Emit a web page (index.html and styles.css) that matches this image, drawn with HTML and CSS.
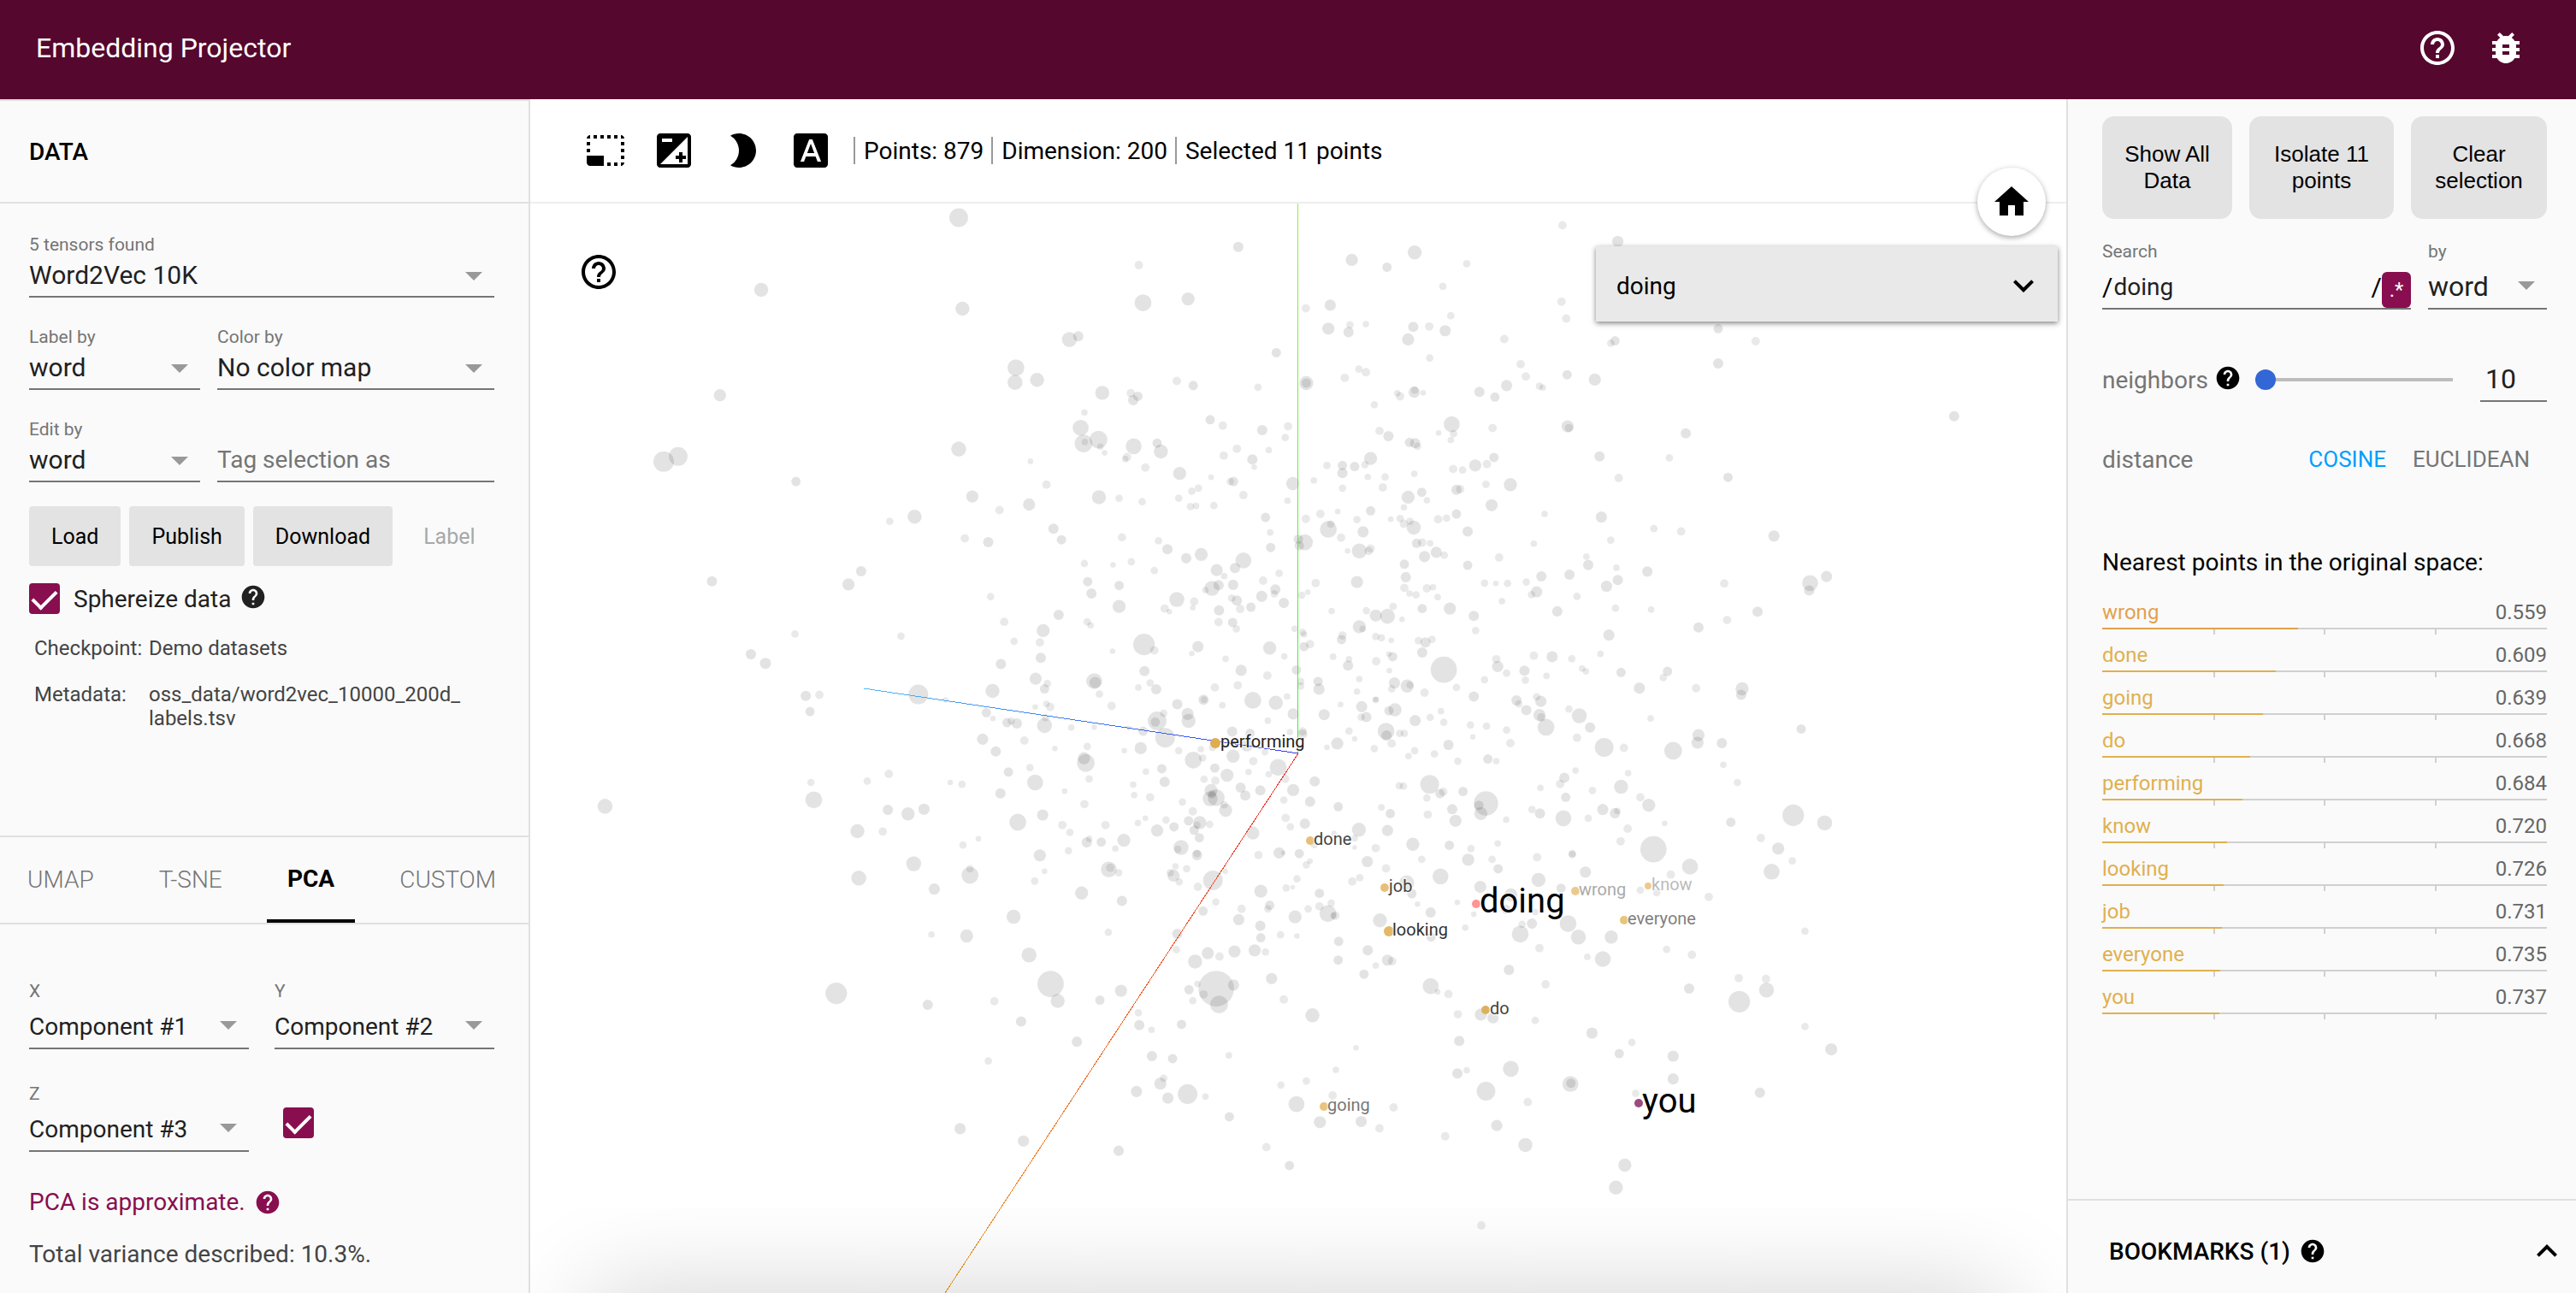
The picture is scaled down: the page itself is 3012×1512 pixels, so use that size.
FILE: index.html
```html
<!DOCTYPE html>
<html lang="en">
<head>
<meta charset="utf-8">
<title>Embedding Projector</title>
<link rel="stylesheet" href="styles.css">
</head>
<body>
<svg class="defs" aria-hidden="true">
  <symbol id="i-help" viewBox="0 0 24 24"><path d="M12 2C6.48 2 2 6.48 2 12s4.48 10 10 10 10-4.48 10-10S17.52 2 12 2zm1 17h-2v-2h2v2zm2.07-7.75l-.9.92C13.45 12.9 13 13.5 13 15h-2v-.5c0-1.1.45-2.1 1.17-2.83l1.24-1.26c.37-.36.59-.86.59-1.41 0-1.1-.9-2-2-2s-2 .9-2 2H8c0-2.21 1.79-4 4-4s4 1.79 4 4c0 .88-.36 1.68-.93 2.25z"/></symbol>
  <symbol id="i-help-outline" viewBox="0 0 24 24"><path d="M11 18h2v-2h-2v2zm1-16C6.48 2 2 6.48 2 12s4.48 10 10 10 10-4.48 10-10S17.52 2 12 2zm0 18c-4.41 0-8-3.59-8-8s3.59-8 8-8 8 3.59 8 8-3.59 8-8 8zm0-14c-2.21 0-4 1.79-4 4h2c0-1.1.9-2 2-2s2 .9 2 2c0 2-3 1.75-3 5h2c0-2.25 3-2.5 3-5 0-2.21-1.79-4-4-4z"/></symbol>
  <symbol id="i-bug" viewBox="0 0 24 24"><path d="M20 8h-2.81c-.45-.78-1.07-1.45-1.82-1.96L17 4.41 15.59 3l-2.17 2.17C12.96 5.06 12.49 5 12 5c-.49 0-.96.06-1.41.17L8.41 3 7 4.41l1.62 1.63C7.88 6.55 7.26 7.22 6.81 8H4v2h2.09c-.05.33-.09.66-.09 1v1H4v2h2v1c0 .34.04.67.09 1H4v2h2.81c1.04 1.79 2.97 3 5.19 3s4.15-1.21 5.19-3H20v-2h-2.09c.05-.33.09-.66.09-1v-1h2v-2h-2v-1c0-.34-.04-.67-.09-1H20V8zm-6 8h-4v-2h4v2zm0-4h-4v-2h4v2z"/></symbol>
  <symbol id="i-select" viewBox="0 0 24 24"><path d="M23 15h-2v2h2v-2zm0-4h-2v2h2v-2zm0 8h-2v2c1 0 2-1 2-2zM15 3h-2v2h2V3zm8 4h-2v2h2V7zm-2-4v2h2c0-1-1-2-2-2zM3 21h8v-6H1v4c0 1.100.9 2 2 2zM3 7H1v2h2V7zm12 12h-2v2h2v-2zm4-16h-2v2h2V3zm0 16h-2v2h2v-2zM3 3C2 3 1 4 1 5h2V3zm0 8H1v2h2v-2zm8-8H9v2h2V3zM7 3H5v2h2V3z"/></symbol>
  <symbol id="i-exposure" viewBox="0 0 24 24"><path d="M15 17v2h2v-2h2v-2h-2v-2h-2v2h-2v2h2zm5-15H4c-1.100 0-2 .9-2 2v16c0 1.100.9 2 2 2h16c1.100 0 2-.9 2-2V4c0-1.100-.9-2-2-2zM5 5h6v2H5V5zm15 15H4L20 4v16z"/></symbol>
  <symbol id="i-moon" viewBox="0 0 24 24"><path d="M10 2c-1.820 0-3.530.5-5 1.350C7.990 5.080 10 8.300 10 12s-2.010 6.920-5 8.650C6.470 21.500 8.180 22 10 22c5.520 0 10-4.480 10-10S15.520 2 10 2z"/></symbol>
  <symbol id="i-font" viewBox="0 0 24 24"><path d="M9.930 13.500h4.140L12 7.980zM20 2H4c-1.100 0-2 .9-2 2v16c0 1.100.9 2 2 2h16c1.100 0 2-.9 2-2V4c0-1.100-.9-2-2-2zm-4.050 16.500l-1.140-3H9.170l-1.120 3H5.960l5.110-13h1.860l5.110 13h-2.090z"/></symbol>
  <symbol id="i-home" viewBox="0 0 24 24"><path d="M10 20v-6h4v6h5v-8h3L12 3 2 12h3v8z"/></symbol>
  <symbol id="i-more" viewBox="0 0 24 24"><path d="M16.590 8.590L12 13.170 7.410 8.590 6 10l6 6 6-6z"/></symbol>
  <symbol id="i-less" viewBox="0 0 24 24"><path d="M12 8l-6 6 1.410 1.410L12 10.830l4.590 4.580L18 14z"/></symbol>
</svg>

<header class="appbar">
  <h1 class="appbar-title">Embedding Projector</h1>
  <nav class="appbar-actions">
    <a href="#help" class="icon-btn" aria-label="Help"><svg class="icon"><use href="#i-help-outline"/></svg></a>
    <a href="#bug" class="icon-btn" aria-label="Report a bug"><svg class="icon"><use href="#i-bug"/></svg></a>
  </nav>
</header>

<div class="layout">
  <aside class="panel panel-left">
    <h2 class="panel-title">DATA</h2>
    <section class="data">
      <div class="field">
        <label for="tensor">5 tensors found</label>
        <div class="select"><select id="tensor"><option>Word2Vec 10K</option></select></div>
      </div>
      <div class="field-row">
        <div class="field">
          <label for="label-by">Label by</label>
          <div class="select"><select id="label-by"><option>word</option></select></div>
        </div>
        <div class="field">
          <label for="color-by">Color by</label>
          <div class="select"><select id="color-by"><option>No color map</option></select></div>
        </div>
      </div>
      <div class="field-row">
        <div class="field">
          <label for="edit-by">Edit by</label>
          <div class="select"><select id="edit-by"><option>word</option></select></div>
        </div>
        <div class="field field-end">
          <input class="text-input" type="text" placeholder="Tag selection as" aria-label="Tag selection as">
        </div>
      </div>
      <div class="buttons">
        <button type="button" class="btn">Load</button>
        <button type="button" class="btn">Publish</button>
        <button type="button" class="btn">Download</button>
        <button type="button" class="btn" disabled>Label</button>
      </div>
      <div class="check-row">
        <input class="check" type="checkbox" id="sphereize" checked>
        <label for="sphereize">Sphereize data</label>
        <svg class="icon-small"><use href="#i-help"/></svg>
      </div>
      <dl class="meta">
        <dt>Checkpoint:</dt><dd>Demo datasets</dd>
        <dt>Metadata:</dt><dd>oss_data/word2vec_10000_200d_<wbr>labels.tsv</dd>
      </dl>
    </section>

    <section class="projections">
      <div class="tabs" role="tablist">
        <button type="button" class="tab" role="tab">UMAP</button>
        <button type="button" class="tab" role="tab">T-SNE</button>
        <button type="button" class="tab tab-active" role="tab" aria-selected="true">PCA</button>
        <button type="button" class="tab" role="tab">CUSTOM</button>
      </div>
      <div class="pca">
        <div class="pca-grid">
          <div class="field field-tall">
            <label for="pca-x">X</label>
            <div class="select"><select id="pca-x"><option>Component #1</option></select></div>
          </div>
          <div class="field field-tall">
            <label for="pca-y">Y</label>
            <div class="select"><select id="pca-y"><option>Component #2</option></select></div>
          </div>
          <div class="field field-tall">
            <label for="pca-z">Z</label>
            <div class="select"><select id="pca-z"><option>Component #3</option></select></div>
          </div>
          <div class="pca-check"><input class="check" type="checkbox" aria-label="Use Z component" checked></div>
        </div>
        <p class="pca-note">PCA is approximate. <svg class="icon-small"><use href="#i-help"/></svg></p>
        <p class="pca-variance">Total variance described: 10.3%.</p>
      </div>
    </section>
  </aside>

  <main class="main">
    <div class="toolbar">
      <button type="button" class="tool" aria-label="Bounding box selection"><svg class="icon"><use href="#i-select"/></svg></button>
      <button type="button" class="tool" aria-label="Edit selection"><svg class="icon"><use href="#i-exposure"/></svg></button>
      <button type="button" class="tool" aria-label="Night mode"><svg class="icon"><use href="#i-moon"/></svg></button>
      <button type="button" class="tool" aria-label="3D labels"><svg class="icon"><use href="#i-font"/></svg></button>
      <ul class="stats">
        <li>Points: 879</li>
        <li>Dimension: 200</li>
        <li>Selected 11 points</li>
      </ul>
    </div>
    <div class="stage">
      <svg class="plot" viewBox="620 238 1796 1274" preserveAspectRatio="xMidYMid slice">
        <defs>
          <linearGradient id="g-y" gradientUnits="userSpaceOnUse" x1="0" y1="238" x2="0" y2="881"><stop offset="0" stop-color="#91f233"/><stop offset="1" stop-color="#33f033"/></linearGradient>
          <linearGradient id="g-z" gradientUnits="userSpaceOnUse" x1="1010" y1="0" x2="1518" y2="0"><stop offset="0" stop-color="#4db8f5"/><stop offset=".5" stop-color="#3a78f0"/><stop offset="1" stop-color="#3336ee"/></linearGradient>
          <linearGradient id="g-x" gradientUnits="userSpaceOnUse" x1="0" y1="881" x2="0" y2="1512"><stop offset="0" stop-color="#ee3333"/><stop offset="1" stop-color="#ee9c22"/></linearGradient>
        </defs>
        <g id="points" class="points"></g>
        <path class="axis" stroke="url(#g-y)" d="M1517.400 238L1517.600 881"/>
        <path class="axis" stroke="url(#g-z)" d="M1010 805L1518 881"/>
        <path class="axis" stroke="url(#g-x)" d="M1518 881L1105 1512"/>
        <g id="marks"></g>
        <g class="labels">
          <text x="1427" y="874" fill="#222">performing</text>
          <text x="1536" y="988" fill="#444">done</text>
          <text x="1624" y="1043" fill="#444">job</text>
          <text x="1628" y="1094" fill="#333">looking</text>
          <text x="1846" y="1047" fill="#aaa">wrong</text>
          <text x="1931" y="1041" fill="#bbb">know</text>
          <text x="1903" y="1081" fill="#808080">everyone</text>
          <text x="1742" y="1186" fill="#444">do</text>
          <text x="1552" y="1299" fill="#777">going</text>
          <text class="label-big" x="1730" y="1067">doing</text>
          <text class="label-big" x="1920" y="1301">you</text>
        </g>
      </svg>
      <svg class="icon stage-help"><use href="#i-help-outline"/></svg>
      <button type="button" class="home" aria-label="Reset zoom"><svg class="icon"><use href="#i-home"/></svg></button>
      <button type="button" class="metadata-card"><span>doing</span><svg class="icon"><use href="#i-more"/></svg></button>
      <div class="drawer"><div class="drawer-edge"></div></div>
    </div>
  </main>

  <aside class="panel panel-right">
    <section class="inspector">
      <div class="actions">
        <button type="button" class="action">Show All Data</button>
        <button type="button" class="action">Isolate 11 points</button>
        <button type="button" class="action">Clear selection</button>
      </div>
      <div class="search-row">
        <div class="field field-tall search">
          <label for="search">Search</label>
          <div class="search-box">
            <span>/</span><input id="search" type="text" value="doing"><span>/</span><button type="button" class="regex" aria-label="Enable regex mode">.*</button>
          </div>
        </div>
        <div class="field field-tall by">
          <label for="by">by</label>
          <div class="select"><select id="by"><option>word</option></select></div>
        </div>
      </div>
      <div class="neighbors">
        <label for="nn">neighbors</label>
        <svg class="icon-small"><use href="#i-help"/></svg>
        <input id="nn" class="slider" type="range" min="10" max="999" value="10">
        <input class="nn-input" type="number" value="10" aria-label="Number of neighbors">
      </div>
      <div class="distance">
        <span class="distance-name">distance</span>
        <button type="button" class="metric metric-on">COSINE</button>
        <button type="button" class="metric">EUCLIDEAN</button>
      </div>
      <h3 class="nearest-title">Nearest points in the original space:</h3>
      <ol class="nearest">
        <li class="nn-first"><div class="nn-text"><a href="#wrong">wrong</a><span>0.559</span></div><div class="nn-bar"><div class="nn-fill" style="width:44.1%"></div></div></li>
        <li><div class="nn-text"><a href="#done">done</a><span>0.609</span></div><div class="nn-bar"><div class="nn-fill" style="width:39.1%"></div></div></li>
        <li><div class="nn-text"><a href="#going">going</a><span>0.639</span></div><div class="nn-bar"><div class="nn-fill" style="width:36.1%"></div></div></li>
        <li><div class="nn-text"><a href="#do">do</a><span>0.668</span></div><div class="nn-bar"><div class="nn-fill" style="width:33.2%"></div></div></li>
        <li><div class="nn-text"><a href="#performing">performing</a><span>0.684</span></div><div class="nn-bar"><div class="nn-fill" style="width:31.6%"></div></div></li>
        <li><div class="nn-text"><a href="#know">know</a><span>0.720</span></div><div class="nn-bar"><div class="nn-fill" style="width:28%"></div></div></li>
        <li><div class="nn-text"><a href="#looking">looking</a><span>0.726</span></div><div class="nn-bar"><div class="nn-fill" style="width:27.4%"></div></div></li>
        <li><div class="nn-text"><a href="#job">job</a><span>0.731</span></div><div class="nn-bar"><div class="nn-fill" style="width:26.9%"></div></div></li>
        <li><div class="nn-text"><a href="#everyone">everyone</a><span>0.735</span></div><div class="nn-bar"><div class="nn-fill" style="width:26.5%"></div></div></li>
        <li><div class="nn-text"><a href="#you">you</a><span>0.737</span></div><div class="nn-bar"><div class="nn-fill" style="width:26.3%"></div></div></li>
      </ol>
    </section>
    <footer class="bookmarks">
      <h3>BOOKMARKS (1)</h3>
      <svg class="icon-small"><use href="#i-help"/></svg>
      <button type="button" class="icon-btn expand" aria-label="Expand bookmarks"><svg class="icon"><use href="#i-less"/></svg></button>
    </footer>
  </aside>
</div>
<script src="scatter.js"></script>
</body>
</html>
```
FILE: styles.css
```css
* { box-sizing: border-box; }
body {
  margin: 0;
  min-height: 100vh;
  display: flex;
  flex-direction: column;
  font-family: Roboto, "Liberation Sans", sans-serif;
  font-size: 28px;
  color: #212121;
  background: #fff;
}
h1, h2, h3, p, ul, ol, dl, dd { margin: 0; padding: 0; }
ul, ol { list-style: none; }
button, input, select { font: inherit; color: inherit; margin: 0; }
button { border: 0; background: none; padding: 0; }
.defs { display: none; }
.icon { width: 48px; height: 48px; fill: currentColor; display: block; flex: none; }
.icon-small { width: 32px; height: 32px; fill: currentColor; display: block; flex: none; }
.icon-btn { display: block; color: inherit; }

/* App bar */
.appbar {
  height: 116px;
  padding: 0 58px 4px 42px;
  display: flex;
  align-items: center;
  justify-content: space-between;
  background: #55072e;
  color: #fff;
}
.appbar-title { font-size: 32px; font-weight: 400; }
.appbar-actions { display: flex; gap: 32px; }

.layout {
  flex: 1;
  display: grid;
  grid-template-columns: 620px minmax(0, 1fr) 596px;
}
.panel { background: #fafafa; display: flex; flex-direction: column; }
.panel-left { border-right: 2px solid #e0e0e0; border-top: 2px solid #e0e0e0; }
.panel-right { border-left: 2px solid #e0e0e0; }

/* Data panel */
.panel-title {
  height: 120px;
  padding: 0 34px;
  border-bottom: 2px solid #e0e0e0;
  font-size: 28px;
  font-weight: 500;
  line-height: 120px;
  color: #000;
}
.data { flex: 1; padding: 34px 40px 0 34px; }
.field { display: flex; flex-direction: column; min-width: 0; }
.field label { font-size: 21px; line-height: 28px; color: #757575; }
.field-end { justify-content: flex-end; }
.select { position: relative; border-bottom: 2px solid #757575; }
.select::after {
  content: "";
  position: absolute;
  right: 14px;
  top: 50%;
  margin-top: -5px;
  border: 10px solid transparent;
  border-top-color: #999;
  border-bottom: 0;
  pointer-events: none;
}
.select select {
  display: block;
  width: 100%;
  height: 46px;
  padding: 0 0 3px;
  border: 0;
  background: none;
  appearance: none;
  font-size: 30px;
}
.field-tall .select select { height: 52px; padding: 2px 0 0; font-size: 28px; }
.text-input {
  width: 100%;
  height: 48px;
  padding: 0 0 3px;
  border: 0;
  border-bottom: 2px solid #757575;
  background: none;
}
.text-input::placeholder { color: #757575; opacity: 1; }
.field-row {
  display: grid;
  grid-template-columns: 200px 1fr;
  gap: 20px;
  margin-top: 32px;
}
.buttons { display: flex; gap: 10px; margin-top: 28px; }
.btn {
  height: 70px;
  padding: 0 26px;
  border-radius: 4px;
  background: #e3e3e3;
  font-size: 25px;
  color: #000;
}
.btn:disabled { background: none; color: #a8a8a8; }
.check-row { display: flex; align-items: center; height: 36px; margin-top: 20px; }
.check-row label { margin: 0 10px 0 16px; }
.check-row .icon-small { margin-top: -4px; }
.check {
  appearance: none;
  width: 36px;
  height: 36px;
  border-radius: 4px;
  background: #880e4f;
  display: grid;
  place-items: start center;
}
.check::after {
  content: "";
  width: 12px;
  height: 24px;
  margin-top: 2px;
  border: solid #fff;
  border-width: 0 4px 4px 0;
  transform: rotate(45deg);
}
.meta {
  display: grid;
  grid-template-columns: 134px 1fr;
  row-gap: 26px;
  margin: 26px 0 0 6px;
  font-size: 24px;
  line-height: 28px;
  color: #444;
}

/* Projections */
.projections { border-top: 2px solid #e0e0e0; }
.tabs {
  height: 102px;
  display: flex;
  align-items: stretch;
  justify-content: space-between;
  padding: 0 14px 0 8px;
  border-bottom: 2px solid #e0e0e0;
}
.tab {
  padding: 2px 24px 0;
  border-bottom: 4px solid transparent;
  font-weight: 300;
  color: #757575;
}
.tab-active { border-color: #000; font-weight: 700; color: #000; padding-top: 0; }
.pca { padding: 64px 40px 27px 34px; }
.pca-grid { display: grid; grid-template-columns: 1fr 1fr; gap: 38px 30px; }
.pca-check { padding: 30px 10px 0; }
.pca-note { display: flex; align-items: center; gap: 10px; margin-top: 41px; line-height: 36px; color: #880e4f; }
.pca-variance { margin-top: 25px; line-height: 36px; color: #444; }

/* Main view */
.main { display: flex; flex-direction: column; min-width: 0; }
.toolbar {
  height: 122px;
  padding: 0 48px;
  display: flex;
  align-items: center;
  border-bottom: 2px solid #eee;
  color: #000;
}
.tool { width: 80px; height: 80px; padding: 16px; }
.stats { display: flex; margin-left: 10px; }
.stats li {
  height: 32px;
  padding: 0 9px 0 10px;
  border-left: 2px solid #999;
  line-height: 34px;
}
.stage { flex: 1; position: relative; min-height: 0; display: flex; }
.plot { width: 100%; height: 1274px; max-height: calc(100vh - 238px); display: block; }
.points { fill: #000; fill-opacity: .11; }
.axis { fill: none; stroke-width: 1; shape-rendering: crispEdges; }
.labels text { font-size: 20px; paint-order: stroke; stroke: #fff; stroke-opacity: .5; stroke-width: 3px; }
.labels .label-big { font-size: 40px; fill: #000; }
.stage-help { position: absolute; left: 56px; top: 56px; color: #000; }
.home {
  position: absolute;
  right: 24px;
  top: -42px;
  width: 80px;
  height: 80px;
  padding: 16px;
  border-radius: 50%;
  background: #fff;
  color: #000;
  box-shadow: 0 2px 6px rgba(0, 0, 0, .35);
}
.metadata-card {
  position: absolute;
  right: 10px;
  top: 50px;
  width: 540px;
  height: 88px;
  padding: 4px 16px 0 24px;
  display: flex;
  align-items: center;
  justify-content: space-between;
  background: #e9e9e9;
  color: #000;
  box-shadow: 0 2px 6px rgba(0, 0, 0, .5);
}
/* Closed notification drawer: only its shadow shows */
.drawer {
  position: absolute;
  left: 0;
  right: 0;
  bottom: 0;
  height: 100px;
  padding: 100px 70px 0;
  overflow: hidden;
  pointer-events: none;
}
.drawer-edge { height: 300px; box-shadow: 0 0 120px rgba(0, 0, 0, .18); }

/* Inspector */
.inspector { flex: 1; padding: 20px 34px 0 40px; }
.actions { display: grid; grid-template-columns: 152fr 169fr 159fr; gap: 20px; }
.action {
  height: 120px;
  padding: 0 20px;
  border-radius: 14px;
  background: #e3e3e3;
  font-family: "Liberation Sans", Arial, sans-serif;
  font-size: 26px;
  line-height: 31px;
  color: #000;
}
.search-row { display: grid; grid-template-columns: 1fr 139px; gap: 20px; margin-top: 24px; }
.search-box { display: flex; align-items: center; height: 54px; padding-top: 2px; border-bottom: 2px solid #757575; }
.search-box input { flex: 1; min-width: 0; padding: 0 0 0 1px; border: 0; background: none; }
.search-box span { color: #000; font-size: 30px; }
.regex { align-self: flex-end; width: 34px; height: 42px; border-radius: 6px; background: #880e4f; color: #fff; font-size: 24px; }
.field-tall.by .select select { font-size: 32px; }
.neighbors { display: flex; align-items: center; margin-top: 56px; color: #757575; }
.neighbors .icon-small { margin: -4px 16px 0 7px; color: #000; }
.slider {
  flex: 1;
  min-width: 0;
  height: 24px;
  appearance: none;
  background: linear-gradient(#bdbdbd, #bdbdbd) center / 100% 4px no-repeat;
}
.slider::-webkit-slider-thumb {
  appearance: none;
  width: 24px;
  height: 24px;
  border-radius: 50%;
  background: #3367d6;
}
.nn-input {
  width: 78px;
  height: 52px;
  margin-left: 32px;
  padding: 0 0 0 6px;
  border: 0;
  border-bottom: 2px solid #757575;
  background: none;
  font-size: 32px;
  color: #212121;
  appearance: textfield;
}
.nn-input::-webkit-inner-spin-button { display: none; }
.distance { display: flex; align-items: center; gap: 31px; height: 36px; margin-top: 49px; padding-right: 20px; color: #757575; }
.distance-name { flex: 1; }
.metric { font-size: 26px; }
.metric-on { color: #009efe; }
.nearest-title { margin-top: 85px; font-size: 28px; font-weight: 400; line-height: 36px; color: #000; }
.nearest { margin-top: 22px; display: flex; flex-direction: column; gap: 6px; font-size: 24px; }
.nn-text { display: flex; justify-content: space-between; line-height: 36px; color: #666; }
.nn-text a { color: #e0b04f; text-decoration: none; }
.nn-first .nn-text a { color: #e3a04e; }
.nn-bar {
  height: 8px;
  background:
    linear-gradient(#d0d0d0, #d0d0d0) 0 0 / 100% 2px no-repeat,
    linear-gradient(#d0d0d0, #d0d0d0) 25% 0 / 2px 8px no-repeat,
    linear-gradient(#d0d0d0, #d0d0d0) 50% 0 / 2px 8px no-repeat,
    linear-gradient(#d0d0d0, #d0d0d0) 75% 0 / 2px 8px no-repeat;
}
.nn-fill { height: 2px; background: #e0b04f; }
.nn-first .nn-fill { background: #e3a04e; }
.bookmarks {
  height: 110px;
  padding: 10px 10px 0 48px;
  display: flex;
  align-items: center;
  gap: 10px;
  border-top: 2px solid #e0e0e0;
  color: #000;
}
.bookmarks h3 { font-size: 28px; font-weight: 500; }
.expand { margin-left: auto; }
```
FILE: scatter.js
```javascript
// Point cloud. Each block has an origin, a unit size per axis, and
// its points as flat triples: x, y, radius (radius in x units).
const blocks = [
  { ox: 680, oy: 230, ux: 860 / 1568, uy: 640 / 1568, pts: [
    804,60,20, 1400,144,11, 1188,196,9, 383,267,15, 812,321,15, 1197,304,18, 1293,293,14, 1040,409,16, 1059,400,11, 1481,447,10,
    926,490,18, 924,532,16, 971,525,15, 1269,528,9, 1304,541,10, 1442,546,8, 1110,562,15, 1171,563,9, 1186,572,10, 1176,583,11,
    295,569,13, 1072,618,7, 1340,639,10, 1367,656,9, 1451,669,11, 1064,662,17, 1102,696,19, 1070,707,19, 1073,703,7, 1106,716,7,
    1115,734,6, 1177,715,17, 1227,706,10, 1235,730,15, 1397,722,9, 1369,742,9, 1465,726,7, 1430,753,11, 1434,775,6, 1163,746,9,
    1159,752,7, 1202,776,9, 175,759,22, 206,744,20, 804,723,16, 957,758,6, 457,816,10, 991,825,9, 1275,793,14, 1342,804,6,
    1390,816,10, 1383,816,8, 1315,835,8, 1301,844,8, 1411,855,9, 833,859,13, 1103,861,15, 1146,864,8, 1195,874,8, 1273,864,8,
    954,882,13, 891,898,9, 1298,888,8, 1310,886,7, 1348,885,8, 710,917,15, 657,930,8, 1458,919,10, 1468,962,7, 1006,951,11,
    1023,983,10, 817,979,9, 867,990,11, 1152,976,9, 1230,986,8, 1249,1010,11, 1469,1005,10, 1321,1025,14, 1289,1036,11, 1411,1042,17,
    1393,1064,11, 1072,1051,8, 1133,1055,6, 1172,1046,8, 1221,1071,8, 1354,1070,13, 1370,1087,7, 596,1073,11, 569,1111,13, 278,1102,11,
    1079,1103,10, 1146,1114,10, 1087,1137,11, 1344,1122,16, 1358,1113,11, 1330,1127,7, 1389,1112,11, 1453,1100,9, 1487,1079,8, 1479,1125,11,
    1477,1138,8, 1450,1145,12, 872,1146,8, 1269,1154,16, 1306,1160,9, 1386,1150,8, 1397,1157,11, 1404,1181,9, 1427,1176,10, 1303,1178,6,
    1146,1174,14, 1243,1180,9, 1253,1189,6, 1359,1185,11, 1017,1198,11, 901,1218,9, 1078,1218,8, 1085,1228,7, 1358,1219,9, 1388,1220,10,
    1396,1238,8, 984,1243,14, 922,1274,8, 977,1277,9, 455,1253,8, 681,1259,8, 1199,1283,23, 1221,1300,9, 1314,1289,12, 1301,1309,6,
    1467,1293,14, 1132,1302,6, 1373,1324,7, 361,1311,11, 392,1337,12, 894,1339,11, 979,1321,11, 1200,1359,11, 1406,1357,12, 1462,1372,9,
    968,1381,13, 993,1395,8, 987,1410,10, 1093,1388,17, 1095,1392,12, 1187,1406,7, 1212,1393,8, 1225,1411,11, 1350,1406,9, 1399,1400,9,
    478,1430,11, 507,1427,9, 487,1475,10, 718,1426,21, 776,1442,6, 876,1416,15, 1104,1425,8, 1130,1459,9, 1270,1454,11, 1326,1441,11,
    1327,1441,7, 1366,1457,7, 1431,1443,18, 1480,1450,15, 863,1478,10, 877,1495,6, 967,1462,6, 991,1453,7, 999,1462,9, 987,1515,16,
    989,1493,8, 907,1507,10, 928,1509,11, 916,1502,8, 1044,1521,7, 1093,1520,6, 1241,1480,8, 1227,1502,20, 1223,1505,10, 1292,1482,13,
    1294,1502,15, 1463,1501,7, 1166,1522,5 ] },
  { ox: 1500, oy: 230, ux: 860 / 1568, uy: 640 / 1568, pts: [
    596,82,9, 714,128,12, 281,160,15, 147,181,13, 222,202,10, 392,192,8, 341,257,8, 49,320,9, 101,311,12, 594,301,9,
    604,349,9, 358,341,8, 97,378,13, 143,367,8, 140,388,11, 177,365,7, 278,373,11, 312,372,9, 346,384,12, 267,409,13,
    472,408,9, 928,378,10, 708,413,10, 699,420,8, 1008,414,9, 313,462,8, 507,480,9, 928,478,11, 162,494,8, 177,503,9,
    132,519,9, 518,515,9, 606,510,10, 665,524,13, 50,534,15, 50,534,10, 477,541,12, 547,543,8, 554,547,7, 419,559,11,
    452,574,10, 244,563,7, 250,572,9, 280,560,12, 281,554,8, 299,562,6, 195,596,8, 1431,629,11, 360,652,17, 364,679,8,
    358,697,7, 332,677,6, 447,663,9, 607,658,13, 610,663,9, 206,671,9, 225,686,11, 11,658,9, 5,690,8, 859,678,11,
    270,704,10, 282,706,11, 287,715,8, 675,744,11, 824,748,8, 187,750,14, 450,747,10, 435,766,9, 410,770,13, 94,770,8,
    127,770,10, 153,773,10, 175,768,8, 127,792,11, 363,780,9, 383,783,8, 280,794,7, 181,803,7, 218,803,8, 66,813,7,
    716,806,9, 949,804,10, 433,824,8, 485,825,14, 21,822,14, 213,833,9, 127,835,8, 370,840,11, 378,838,9, 296,847,10,
    267,861,14, 307,870,7, 10,871,7, 445,884,13, 258,890,7, 187,900,10, 370,909,10, 80,909,9, 117,902,6, 558,909,7,
    679,918,12, 49,923,9, 158,925,8, 230,924,6, 250,922,8, 331,924,9, 349,921,8, 271,930,8, 258,937,9, 279,948,15,
    97,953,18, 102,938,8, 171,960,12, 394,959,11, 791,951,8, 849,959,9, 124,977,9, 33,981,10, 47,990,17, 35,1000,10,
    699,984,8, 1047,972,12, 285,993,10, 297,991,9, 314,993,7, 535,994,7, 138,1015,6, 163,1015,16, 183,1015,9, 187,1008,9,
    327,1019,12, 344,1027,8, 302,1031,12, 461,1034,9, 259,1053,10, 394,1056,10, 647,1031,7, 651,1055,11, 711,1063,7, 777,1074,11,
    611,1083,11, 551,1088,11, 262,1090,11, 158,1104,13, 70,1107,9, 430,1107,8, 454,1108,6, 479,1108,8, 519,1104,8, 714,1098,11,
    690,1116,12, 941,1108,9, 1124,1107,17, 1122,1128,11, 1159,1088,12, 259,1121,9, 307,1122,9, 320,1119,7, 53,1133,6, 40,1142,8,
    270,1137,7, 284,1141,8, 330,1147,7, 541,1132,12, 530,1140,8, 627,1145,8, 467,1159,7, 2,1164,11, 235,1174,8, 178,1186,8,
    297,1180,10, 356,1180,13, 104,1187,7, 198,1200,13, 223,1202,16, 254,1211,6, 407,1201,11, 585,1188,11, 709,1179,8, 785,1183,7,
    1012,1189,11, 947,1213,9, 886,1234,11, 163,1232,14, 170,1238,7, 25,1238,7, 411,1243,8, 42,1248,8, 127,1257,9, 125,1269,10,
    198,1260,8, 210,1264,8, 231,1271,6, 289,1272,8, 304,1277,11, 318,1268,8, 45,1254,7, 695,1256,12, 58,1282,9, 45,1289,10,
    297,1306,11, 3,1317,7, 107,1318,7, 226,1310,6, 234,1318,10, 141,1325,7, 139,1343,11, 199,1331,9, 535,1315,9, 574,1318,12,
    616,1324,8, 677,1310,7, 455,1325,9, 458,1346,12, 477,1365,8, 638,1352,7, 646,1360,7, 515,1358,11, 227,1358,6, 29,1356,10,
    343,1355,28, 721,1363,10, 820,1360,10, 811,1378,8, 562,1373,7, 517,1385,8, 430,1384,8, 163,1382,7, 75,1389,10, 77,1411,12,
    38,1389,8, 38,1402,8, 238,1393,12, 232,1410,8, 265,1402,14, 271,1399,8, 370,1406,8, 302,1421,9, 158,1418,7, 760,1408,12,
    881,1408,9, 979,1410,14, 977,1427,11, 407,1432,11, 9,1432,7, 198,1442,7, 198,1440,6, 123,1455,6, 498,1443,11, 503,1453,8,
    541,1433,8, 550,1446,12, 519,1471,11, 168,1461,12, 239,1470,14, 226,1473,10, 337,1474,7, 610,1468,8, 632,1487,16, 547,1485,13,
    551,1492,9, 22,1482,12, 88,1484,12, 167,1491,8, 178,1491,11, 314,1492,8, 282,1501,12, 343,1506,8, 784,1495,7, 400,1514,8,
    434,1517,8, 561,1520,18, 655,1521,11, 1105,1525,10, 477,1528,8, 141,1531,8, 15,1534,7, 42,1532,9 ] },
  { ox: 680, oy: 850, ux: 860 / 1568, uy: 662 / 1568, pts: [
    1197,12,10, 1244,30,21, 1387,13,11, 1425,18,10, 855,34,12, 944,38,9, 883,68,11, 1009,60,6, 1078,54,8, 1192,59,13,
    1157,66,6, 1273,66,8, 1320,62,7, 1345,57,8, 1389,81,14, 1418,50,14, 1457,70,7, 1432,95,9, 1071,87,13, 1075,100,19,
    1304,92,18, 1324,86,8, 1485,112,18, 910,125,10, 956,113,8, 1237,116,10, 1350,114,10, 1203,124,7, 1422,125,7, 1376,134,14,
    1465,131,7, 655,130,9, 609,150,8, 489,154,8, 786,154,6, 811,159,8, 967,154,17, 1082,144,8, 1243,152,11, 1327,145,8,
    1351,149,9, 1176,160,7, 1405,168,11, 1447,176,11, 893,184,11, 1030,178,6, 1178,189,7, 1212,195,9, 1342,176,14, 1415,190,11,
    1353,196,18, 1340,199,16, 1344,187,9, 1281,208,8, 1370,216,8, 1373,231,14, 495,202,18, 50,220,16, 653,230,11, 696,241,14,
    730,228,12, 1072,214,9, 983,244,12, 1303,234,9, 1202,253,6, 1246,258,8, 1186,266,7, 930,264,18, 1025,272,9, 1117,272,9,
    1294,260,10, 1318,265,14, 1312,272,8, 1339,270,8, 1263,277,10, 1306,286,10, 1227,287,13, 1041,292,8, 588,289,15, 642,290,9,
    846,310,6, 1431,294,14, 1317,307,10, 813,327,8, 1156,314,14, 1077,320,11, 1082,310,7, 1108,319,10, 1138,337,7, 1278,334,16,
    1271,339,8, 1038,343,8, 1312,355,11, 1312,351,8, 977,356,13, 1443,355,9, 1487,349,12, 708,379,16, 828,411,18, 828,393,8,
    1124,395,17, 1127,390,9, 1145,404,8, 987,400,6, 1266,386,7, 1290,393,8, 1372,400,6, 1262,412,13, 1255,404,8, 966,427,8,
    1274,429,8, 1346,425,21, 591,419,16, 1314,443,9, 752,449,12, 1448,455,14, 1066,460,14, 1352,485,8, 1152,482,11, 1325,510,10,
    1407,504,9, 1467,494,10, 1463,504,8, 921,526,15, 1401,534,12, 1447,551,11, 1123,569,8, 1270,573,11, 1490,576,8, 746,575,7,
    821,579,14, 1448,584,10, 1268,617,8, 1335,627,13, 1360,636,9, 1392,622,13, 1435,619,13, 1458,623,8, 954,632,16, 1308,650,15,
    1471,697,12, 1000,712,28, 1015,759,15, 1353,725,38, 1390,715,12, 1326,741,9, 1359,769,19, 1313,712,7, 1295,728,10, 1303,758,8,
    1150,731,13, 1105,757,10, 543,738,23, 738,770,11, 880,760,9, 1187,792,8, 937,816,11, 1189,826,11, 1215,839,7, 1279,824,10,
    1056,872,11, 1216,912,11, 1260,919,10, 1380,910,7, 867,925,8, 1183,1010,12, 1234,988,13, 1241,973,8, 1250,1028,12, 1292,1017,21,
    1330,1024,7, 1491,992,8, 1381,1080,10, 807,1113,12, 942,1147,12, 1145,1174,11, 1460,1164,9 ] },
  { ox: 1500, oy: 850, ux: 860 / 1568, uy: 662 / 1568, pts: [
    42,20,10, 220,12,18, 221,24,11, 249,18,8, 259,18,8, 153,33,6, 116,46,13, 94,57,6, 195,60,8, 232,46,9,
    353,50,11, 281,66,8, 323,75,8, 268,81,7, 405,28,6, 485,45,9, 627,30,9, 685,57,20, 727,58,9, 832,66,19,
    886,23,13, 884,44,13, 936,45,11, 373,95,8, 437,89,10, 455,95,7, 939,105,7, 624,121,7, 736,128,7, 600,141,11,
    591,158,9, 68,151,11, 5,144,9, 248,163,8, 257,164,8, 313,159,20, 342,180,9, 335,185,10, 384,179,10, 307,197,8,
    22,175,13, 549,169,7, 603,195,10, 660,176,8, 721,166,15, 969,154,8, 762,195,9, 58,207,11, 780,217,14, 118,221,10,
    210,223,7, 2,203,8, 433,212,26, 418,217,10, 422,240,14, 361,228,11, 229,240,10, 309,243,9, 6,252,9, 47,268,11,
    368,260,13, 531,229,8, 548,240,11, 682,229,12, 708,239,11, 713,233,7, 598,253,17, 476,257,7, 651,253,8, 814,267,6,
    955,264,10, 1088,245,23, 1155,266,16, 16,277,8, 162,285,15, 223,287,12, 735,282,9, 720,317,9, 1019,308,9, 1056,337,13,
    109,295,6, 153,309,7, 67,326,8, 277,325,14, 355,328,10, 458,323,7, 198,336,9, 401,337,8, 153,334,5, 790,339,28,
    35,351,10, 1,349,5, 617,354,8, 617,351,8, 542,361,9, 296,367,8, 446,367,8, 395,368,13, 58,372,6, 1086,371,8,
    50,382,8, 180,373,12, 220,392,9, 459,393,10, 868,387,17, 1042,401,17, 645,402,12, 164,418,8, 148,428,9, 336,414,17,
    30,421,8, 264,432,16, 827,409,9, 545,424,15, 421,443,13, 7,446,8, 593,447,10, 762,452,8, 797,459,8, 78,461,10,
    275,462,10, 908,471,9, 21,444,5, 287,491,6, 372,486,6, 103,488,8, 78,497,9, 54,504,8, 96,517,18, 112,523,9,
    108,523,7, 315,514,11, 26,526,14, 486,465,14, 475,505,10, 538,513,7, 407,519,6, 207,536,15, 531,545,11, 510,547,8,
    608,545,18, 389,556,7, 506,574,18, 1113,566,8, 30,579,6, 119,594,10, 316,582,10, 630,582,16, 700,582,14, 547,613,9,
    181,619,11, 818,616,8, 872,631,9, 649,637,7, 682,643,17, 118,646,10, 223,646,12, 233,649,9, 198,661,7, 173,685,10,
    482,673,11, 972,696,9, 1030,698,9, 315,718,17, 330,734,6, 560,713,9, 866,725,11, 1031,729,16, 353,740,9, 973,761,23,
    2,755,9, 373,796,9, 422,797,13, 448,806,12, 538,813,8, 63,799,15, 659,848,12, 1113,830,8, 376,870,11, 744,874,8,
    717,905,10, 1169,893,13, 156,889,6, 832,912,12, 113,950,7, 372,960,11, 392,951,7, 486,947,17, 50,981,8, 832,975,12,
    613,989,17, 614,987,10, 433,1009,20, 752,1015,8, 1017,1013,11, 106,1021,9, 29,1045,17, 236,1054,9, 522,1039,9, 79,1095,13,
    167,1093,12, 206,1112,9, 456,1104,12, 346,1134,9, 517,1158,15, 14,1215,10, 729,1214,14, 710,1276,15, 423,1381,9 ] }
];

// Selected points: x, y, radius, colour.
const selected = [
  [1421, 869, 6, "#e0ac50"], [1532, 983, 5, "#e6c078"], [1619, 1038, 5, "#e6c078"],
  [1624, 1089, 6, "#e4b866"], [1842, 1042, 5, "#ebcb8c"], [1927, 1036, 4, "#ebcb8c"],
  [1899, 1076, 5, "#e8c47c"], [1737, 1181, 5, "#dcb060"], [1548, 1294, 5, "#e8c47c"],
  [1726, 1057, 5, "#ff9494"], [1916, 1290, 5, "#9c4a80"]
];

function circle(parent, x, y, r, fill) {
  const c = document.createElementNS("http://www.w3.org/2000/svg", "circle");
  c.setAttribute("cx", x);
  c.setAttribute("cy", y);
  c.setAttribute("r", r);
  if (fill) c.setAttribute("fill", fill);
  else if (r < 5) c.setAttribute("fill-opacity", 0.085);
  parent.appendChild(c);
}

const cloud = document.getElementById("points");
for (const b of blocks) {
  for (let i = 0; i < b.pts.length; i += 3) {
    circle(cloud, b.ox + b.pts[i] * b.ux, b.oy + b.pts[i + 1] * b.uy, b.pts[i + 2] * b.ux);
  }
}
const marks = document.getElementById("marks");
for (const [x, y, r, fill] of selected) circle(marks, x, y, r, fill);
```
